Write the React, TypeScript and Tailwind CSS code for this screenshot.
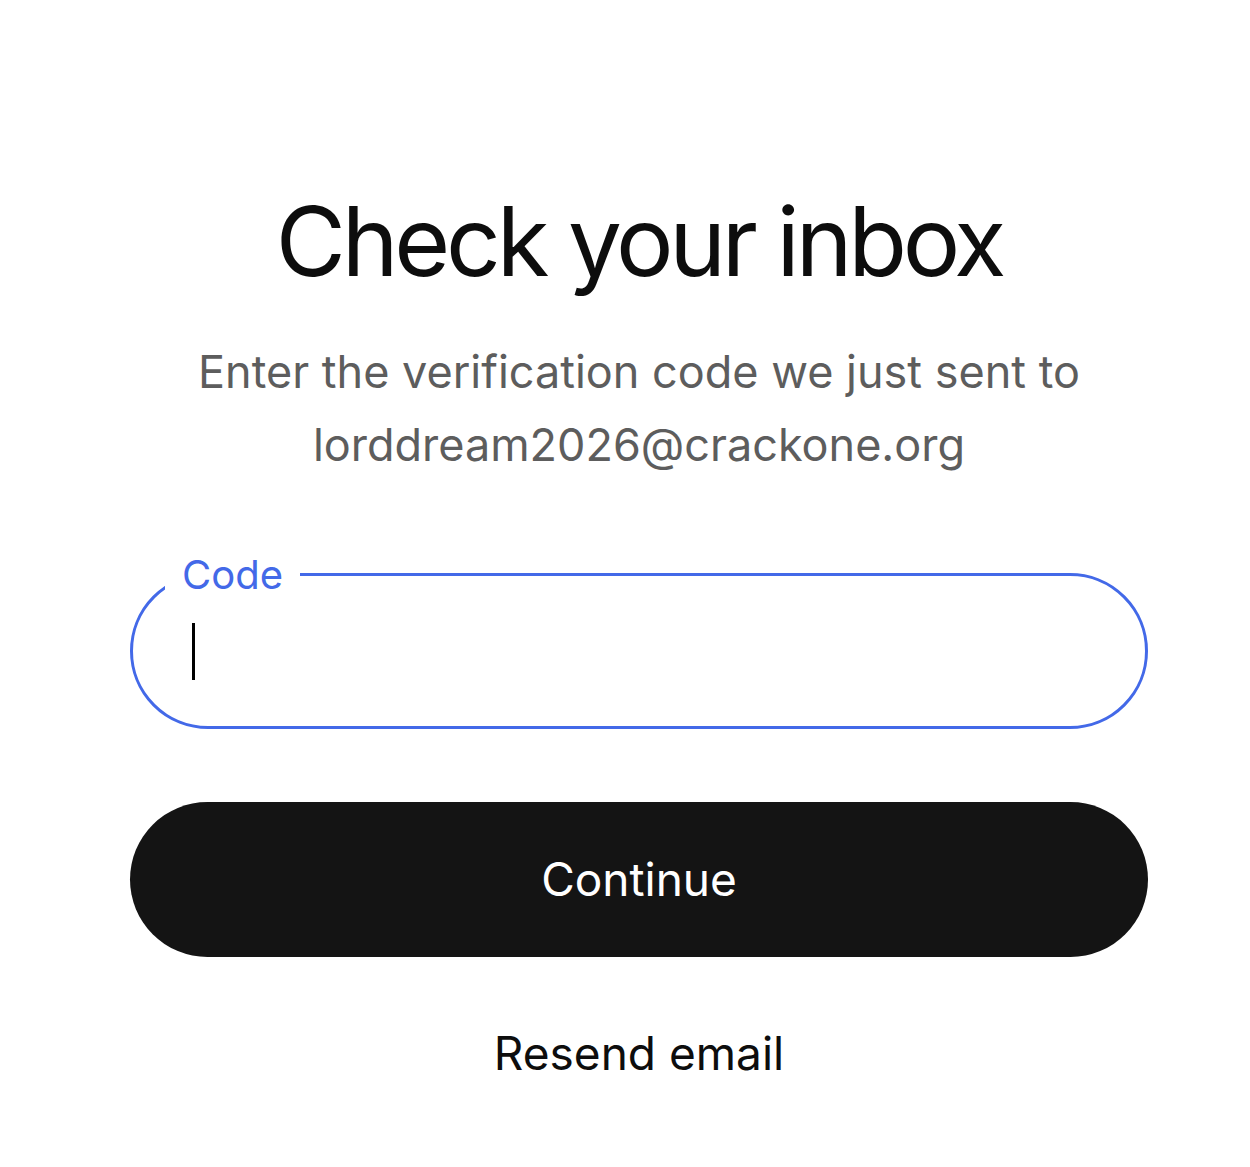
export default function App() {
  return (
    <div className="min-h-[1167px] bg-white" style={{ fontFamily: "Inter, 'Noto Sans', sans-serif" }}>
      <div className="ml-[130px] w-[1018px] pt-[186px] flex flex-col items-center">
        <h1 className="text-[96px] leading-[110px] font-normal text-[#0d0d0d] tracking-[-4.2px]">Check your inbox</h1>
        <p className="mt-[39px] text-center text-[45px] leading-[73px] text-[#5d5d5d]">
          Enter the verification code we just sent to
          <br />
          lorddream2026@crackone.org
        </p>
        <div className="relative mt-[92px] w-full h-[156px] rounded-full border-[3px] border-[#4369e8]">
          <span className="absolute left-[32px] top-[-31px] bg-white px-[17px] text-[40px] leading-[60px] text-[#4369e8]">Code</span>
          <span className="absolute left-[59px] top-[47px] w-[3px] h-[57px] bg-black" />
        </div>
        <button className="mt-[73px] w-full h-[155px] rounded-full bg-[#141414] text-white text-[46px]">Continue</button>
        <button className="mt-[66px] text-[46px] leading-[60px] text-[#0d0d0d]">Resend email</button>
      </div>
    </div>
  );
}
